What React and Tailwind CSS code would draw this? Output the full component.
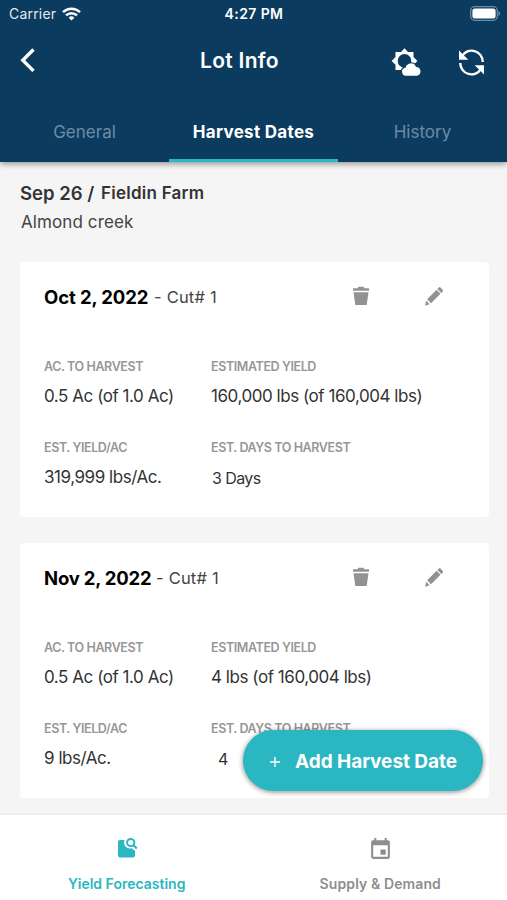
import { MdEvent } from 'react-icons/md';

const lots = [
  {
    date: 'Oct 2, 2022',
    dateClass: 'w-[110px] tracking-[-0.1px]',
    cut: 'Cut# 1',
    toHarvest: '0.5 Ac (of 1.0 Ac)',
    estYield: '160,000 lbs (of 160,004 lbs)',
    perAcre: '319,999 lbs/Ac.',
    days: '3 Days',
    daysClass: 'pt-px pl-px text-[16px] tracking-[-0.6px]',
  },
  {
    date: 'Nov 2, 2022',
    dateClass: 'w-[112px] tracking-[-0.2px]',
    cut: 'Cut# 1',
    toHarvest: '0.5 Ac (of 1.0 Ac)',
    estYield: '4 lbs (of 160,004 lbs)',
    perAcre: '9 lbs/Ac.',
    days: '4',
    daysClass: 'pt-px pl-[7px] text-[16px]',
  },
];

function WifiIcon() {
  return (
    <svg width="19" height="14" viewBox="0 0 19 14" fill="none" stroke="#fff" strokeWidth="2.5">
      <path d="M1 5.200a12.200 12.200 0 0 1 17 0" />
      <path d="M4 8.400a7.900 7.900 0 0 1 11 0" />
      <path d="M9.500 13.600 6.600 10.700a4.200 4.200 0 0 1 5.800 0Z" fill="#fff" stroke="none" />
    </svg>
  );
}

function BatteryIcon() {
  return (
    <svg width="31" height="15" viewBox="0 0 31 15">
      <rect x="0.7" y="0.7" width="26.6" height="13.6" rx="4" fill="none" stroke="#6f8ba2" strokeWidth="1.3" />
      <rect x="2.4" y="2.4" width="23.2" height="10.2" rx="2.5" fill="#fff" />
      <path d="M28.500 5v5c1-.4 1.700-1.400 1.700-2.500S29.500 5.400 28.500 5Z" fill="#6f8ba2" />
    </svg>
  );
}

function WeatherIcon() {
  return (
    <svg width="30" height="30" viewBox="0 0 30 30">
      <path
        d="M13.500 1.200 17 5 22.500 4.900 22.500 10.100 26.400 13.900 22.500 17.700 22.500 22.900 17 22.900 13.500 26.600 10 22.900 4.500 22.900 4.500 17.700 0.600 13.900 4.500 10.100 4.500 4.900 10 5Z"
        fill="#fff"
      />
      <circle cx="13.500" cy="13.900" r="6.800" fill="#0b3c5f" />
      <path
        d="M14.800 29.300a4.600 4.600 0 0 1-.7-9.100 6 6 0 0 1 11.300-.8 5 5 0 0 1 .6 9.900Z"
        fill="#fff"
        stroke="#0b3c5f"
        strokeWidth="1.200"
      />
    </svg>
  );
}

function SyncIcon() {
  return (
    <svg width="27" height="27" viewBox="0 0 27 27" className="mt-[2px]">
      <g fill="none" stroke="#fff" strokeWidth="2.400">
        <path d="M4 7.200A11.100 11.100 0 0 1 24.700 13" />
        <path d="M2.300 14A11.100 11.100 0 0 0 23 19.800" />
      </g>
      <path d="M1 1.500V10.800H10.300ZM26 25.500V16.200H16.700Z" fill="#fff" />
    </svg>
  );
}

function TrashIcon() {
  return (
    <svg width="18" height="20" viewBox="0 0 18 20" fill="#929292">
      <path d="M1 2.300h4.500L6.500.8h5l1 1.500H17v2.400H1ZM1.500 6.200h15L14.700 19H3.300Z" />
    </svg>
  );
}

function PencilIcon() {
  return (
    <svg width="20" height="21" viewBox="0 0 20 21" fill="#929292">
      <path d="M14.900 1.400q.8-.8 1.600 0l2.300 2.500q.7.800 0 1.500l-1.500 1.500-3.900-4ZM12.600 3.700l3.900 4L7 17.200l-3.900-4ZM2.300 14.700l3.400 3.500L1 19.800Z" />
    </svg>
  );
}

function ForecastIcon() {
  return (
    <svg width="22" height="22" viewBox="0 0 22 22">
      <path
        d="M4 3H8.600A6 6 0 0 0 15.800 11.200L19 13.800V18.500A2 2 0 0 1 17 20.500H4A2 2 0 0 1 2 18.500V5A2 2 0 0 1 4 3Z"
        fill="#2ab7c2"
      />
      <circle cx="14.700" cy="5.500" r="3.600" fill="none" stroke="#2ab7c2" strokeWidth="2" />
      <path d="m17.200 8 3.600 3.500" stroke="#2ab7c2" strokeWidth="2.200" />
    </svg>
  );
}

function Header() {
  return (
    <header className="relative z-10 h-[162px] shrink-0 bg-[#0b3c5f] text-white shadow-[0_2px_6px_rgba(0,0,0,0.4)]">
      <div className="grid h-[27px] grid-cols-3 items-center pr-[6px] pl-[9px]">
        <div className="flex items-center gap-[6px]">
          <span className="text-sm tracking-[0.2px] text-[#e3eaf0]">Carrier</span>
          <WifiIcon />
        </div>
        <span className="pr-[2px] text-center text-sm font-semibold tracking-[0.4px]">4:27 PM</span>
        <div className="flex justify-end">
          <BatteryIcon />
        </div>
      </div>

      <div className="flex h-[75px] items-start pt-[20px]">
        <button type="button" className="ml-[19px] w-[181px] pt-px" aria-label="Back">
          <svg width="17" height="25" viewBox="0 0 17 25" fill="none" stroke="#fff" strokeWidth="3.400">
            <path d="M14.500 1.500 3.800 12.200 14.500 22.900" />
          </svg>
        </button>
        <h1 className="w-[191px] text-[21px] leading-[28px] font-semibold tracking-[0.3px]">Lot Info</h1>
        <div className="flex gap-[37px]">
          <WeatherIcon />
          <SyncIcon />
        </div>
      </div>

      <nav className="grid h-[60px] grid-cols-3 text-center text-[17px]">
        <button type="button" className="pt-px text-[#6d8ba5]">General</button>
        <button type="button" className="border-b-[3px] border-[#2ab7c2] pt-[4px] font-bold tracking-[0.3px]">
          Harvest Dates
        </button>
        <button type="button" className="pt-px text-[#6d8ba5]">History</button>
      </nav>
    </header>
  );
}

function Field({ label, value, valueClass = 'text-[17px] tracking-[-0.45px]' }) {
  return (
    <div className="h-[81px]">
      <div className="text-[12.500px] leading-[16px] font-semibold tracking-[-0.4px] whitespace-nowrap text-[#979797]">
        {label}
      </div>
      <div className={`mt-[10px] leading-[22px] whitespace-nowrap text-[#333] ${valueClass}`}>{value}</div>
    </div>
  );
}

function LotCard({ lot }) {
  return (
    <section className="h-[255px] rounded-[4px] bg-white pt-[24px] pl-[24px]">
      <div className="flex h-[73px] items-start">
        <div className="-mt-px flex w-[308px] items-baseline whitespace-nowrap">
          <span className={`text-[18.500px] leading-[24px] font-bold text-black ${lot.dateClass}`}>{lot.date}</span>
          <span className="relative -top-px text-[16.500px] tracking-[0.2px] text-[#444]">- {lot.cut}</span>
        </div>
        <button type="button" className="w-[72px]" aria-label="Delete">
          <TrashIcon />
        </button>
        <button type="button" aria-label="Edit">
          <PencilIcon />
        </button>
      </div>
      <div className="grid grid-cols-[167px_1fr]">
        <Field label="AC. TO HARVEST" value={lot.toHarvest} />
        <Field label="ESTIMATED YIELD" value={lot.estYield} />
        <Field label="EST. YIELD/AC" value={lot.perAcre} />
        <Field label="EST. DAYS TO HARVEST" value={lot.days} valueClass={lot.daysClass} />
      </div>
    </section>
  );
}

function BottomBar() {
  return (
    <nav className="grid h-[85px] shrink-0 grid-cols-2 bg-white text-[14px] leading-[18px] font-semibold shadow-[0_-1px_2px_rgba(0,0,0,0.06)]">
      <button type="button" className="flex flex-col items-center pt-[22px] text-[#2ab7c2]">
        <ForecastIcon />
        <span className="mt-[16px]">Yield Forecasting</span>
      </button>
      <button type="button" className="flex flex-col items-center pt-[22px] text-[#8e8e8e]">
        <MdEvent size={25} />
        <span className="mt-[13px] tracking-[0.1px]">Supply &amp; Demand</span>
      </button>
    </nav>
  );
}

export default function App() {
  return (
    <div className="flex h-[900px] w-[507px] flex-col overflow-hidden bg-[#f5f5f5] font-['Inter',sans-serif]">
      <Header />
      <main className="relative h-[653px] shrink-0 pr-[18px] pl-[20px]">
        <div className="h-[100px] pt-[19px] text-[#333]">
          <div className="flex items-baseline leading-[24px] font-semibold whitespace-nowrap">
            <span className="w-[81px] text-[18.500px]">Sep 26 /</span>
            <span className="relative -top-px text-[17px] tracking-[0.25px]">Fieldin Farm</span>
          </div>
          <div className="mt-[5px] pl-px text-[17px] leading-[22px] tracking-[0.1px] text-[#444]">Almond creek</div>
        </div>
        <div className="flex flex-col gap-[26px]">
          {lots.map((lot) => (
            <LotCard key={lot.date} lot={lot} />
          ))}
        </div>
        <button
          type="button"
          className="absolute right-[24px] bottom-[24px] flex h-[61px] w-[240px] items-center rounded-full bg-[#2ab7c2] pt-[3px] pl-[26px] text-white shadow-[0_1px_4px_1px_rgba(0,0,0,0.35)]"
        >
          <svg width="12" height="12" viewBox="0 0 12 12" stroke="#fff" strokeWidth="1.400">
            <path d="M6 1v10M1 6h10" />
          </svg>
          <span className="ml-[14px] text-[19px] font-bold tracking-[-0.05px] whitespace-nowrap">Add Harvest Date</span>
        </button>
      </main>
      <BottomBar />
    </div>
  );
}
